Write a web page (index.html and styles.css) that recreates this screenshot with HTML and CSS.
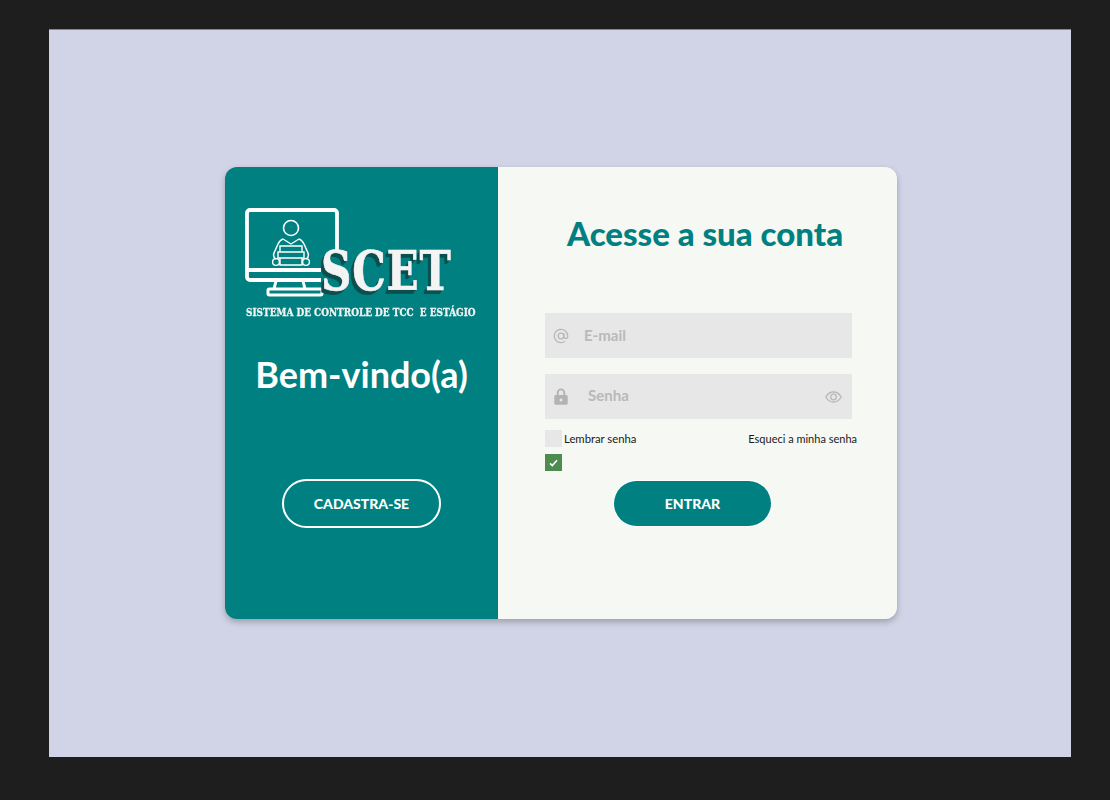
FILE: index.html
```html
<!DOCTYPE html>
<html lang="pt-BR">
<head>
    <meta charset="UTF-8">
    <title>SCET - Login</title>
    <link rel="stylesheet" href="styles.css">
</head>
<body>
<div class="frame">
    <div class="card">
        <section class="welcome">
            <div class="logo">
                <svg class="logo-art" width="110" height="92" viewBox="0 0 110 92" fill="none" stroke="#fff">
                    <path d="M76 72H5a3 3 0 0 1-3-3V5a3 3 0 0 1 3-3h84a3 3 0 0 1 3 3v40" stroke-width="3.8"/>
                    <path d="M2 62h74" stroke-width="3.8"/>
                    <path d="M31 73l-2 8M58 73l2 8" stroke-width="3"/>
                    <rect x="23" y="81" width="54" height="6" rx="1.500" stroke-width="3"/>
                    <circle cx="46" cy="20" r="7.500" stroke-width="1.600"/>
                    <path d="M38 31c-3 1-4 3-5 5l-4 9c-1 3 0 5 2 6M54 31c3 1 4 3 5 5l4 9c1 3 0 5-2 6" stroke-width="1.500"/>
                    <path d="M38 31l8 5 8-5M35 38h22v6H35zM33 44h26v6H33zM35 50h22v7H35z" stroke-width="1.400"/>
                    <circle cx="31" cy="54" r="3.400" stroke-width="1.400"/>
                    <circle cx="61" cy="54" r="3.400" stroke-width="1.400"/>
                </svg>
                <span class="logo-name">SCET</span>
                <span class="logo-sub">SISTEMA DE CONTROLE DE TCC&nbsp; E ESTÁGIO</span>
            </div>
            <h2 class="welcome-title">Bem-vindo(a)</h2>
            <button class="btn-outline">CADASTRA-SE</button>
        </section>

        <section class="access">
            <h1 class="access-title">Acesse a sua conta</h1>
            <form class="login-form">
                <div class="field">
                    <svg class="icon-at" width="16" height="16" viewBox="0 0 24 24" fill="none" stroke="#b9b9b9" stroke-width="2">
                        <circle cx="12" cy="12" r="4.200"/>
                        <path d="M16.200 8v5.500a3 3 0 0 0 5.800 0V12a10 10 0 1 0-4 8"/>
                    </svg>
                    <span class="placeholder">E-mail</span>
                </div>
                <div class="field">
                    <svg class="icon-lock" width="14" height="17" viewBox="0 0 14 17" fill="#b3b3b3">
                        <path d="M2.800 7V4.600a4.200 4.200 0 0 1 8.400 0V7h1a1.500 1.500 0 0 1 1.500 1.500v6.800a1.500 1.500 0 0 1-1.500 1.500H1.800a1.500 1.500 0 0 1-1.500-1.500V8.500A1.500 1.500 0 0 1 1.800 7zM4.700 7h4.600V4.600a2.300 2.300 0 0 0-4.600 0zM7 10.400a1.500 1.500 0 1 0 0 3 1.500 1.500 0 0 0 0-3z" fill-rule="evenodd"/>
                    </svg>
                    <span class="placeholder placeholder-pass">Senha</span>
                    <svg class="icon-eye" width="17" height="12" viewBox="0 0 17 12" fill="none" stroke="#b9b9b9" stroke-width="1.300">
                        <path d="M.8 6C2.600 2.800 5.300 1 8.500 1s5.900 1.800 7.700 5c-1.800 3.200-4.500 5-7.700 5S2.600 9.200.8 6z"/>
                        <circle cx="8.500" cy="6" r="2.800"/>
                    </svg>
                </div>
                <div class="options">
                    <label class="remember"><span class="check"></span>Lembrar senha</label>
                    <a class="forgot">Esqueci a minha senha</a>
                </div>
                <span class="check check-on">
                    <svg width="9" height="8" viewBox="0 0 9 8" fill="none" stroke="#fff" stroke-width="1.600"><path d="M1 4.300l2.300 2.200L8 1.300"/></svg>
                </span>
                <button class="btn-solid" type="button">ENTRAR</button>
            </form>
        </section>
    </div>
</div>
</body>
</html>
```

FILE: styles.css
```css
* {
    margin: 0;
    padding: 0;
    box-sizing: border-box;
}

html, body {
    height: 800px;
    overflow: hidden;
}

body {
    background: #1e1e1e;
    padding: 29px 39px 43px 49px;
    font-family: "Lato", "Noto Sans", sans-serif;
}

.frame {
    height: 728px;
    background: #d1d4e6;
    border-top: 1px solid #85868f;
    display: flex;
    justify-content: center;
    align-items: center;
    padding: 0 0 1px 2px;
}

.card {
    width: 672px;
    height: 452px;
    display: flex;
    border-radius: 12px;
    overflow: hidden;
    box-shadow: 0 3px 6px rgba(0, 0, 0, 0.25);
}

/* lado esquerdo */
.welcome {
    width: 273px;
    background: #008080;
    color: #fff;
    padding-top: 41px;
    display: flex;
    flex-direction: column;
    align-items: center;
}

.logo {
    position: relative;
    width: 233px;
    height: 113px;
    filter: blur(0.4px);
}

.logo-art {
    display: block;
}

.logo-name {
    position: absolute;
    left: 76px;
    top: 33px;
    font-family: "DejaVu Serif", serif;
    font-weight: bold;
    font-size: 54px;
    line-height: 60px;
    letter-spacing: 1px;
    transform: scaleX(0.78);
    transform-origin: left;
    color: #f4f4f4;
    -webkit-text-stroke: 0.6px #f4f4f4;
    text-shadow: -1px 1px 0 #0d4f4f, -2px 2px 0 #0d4f4f, -3px 3px 0 #0d4f4f, -4px 4px 0 #0d4f4f;
}

.logo-sub {
    position: absolute;
    left: 1px;
    top: 97px;
    font-family: "DejaVu Serif", serif;
    font-weight: bold;
    font-size: 10.500px;
    line-height: 14px;
    white-space: nowrap;
    transform: scaleX(0.85);
    transform-origin: left;
    color: #f2f2f2;
    -webkit-text-stroke: 0.3px #f2f2f2;
}

.welcome-title {
    font-size: 36px;
    font-weight: 700;
    line-height: 44px;
    margin-top: 31px;
}

.btn-outline {
    width: 159px;
    height: 49px;
    margin-top: 83px;
    border: 2px solid #fff;
    border-radius: 25px;
    background: transparent;
    color: #fff;
    font-family: inherit;
    font-size: 14px;
    font-weight: 900;
}

/* lado direito */
.access {
    flex: 1;
    background: #f5f8f3;
    padding: 44px 0 0 47px;
}

.access-title {
    width: 320px;
    font-size: 33px;
    line-height: 44px;
    font-weight: 900;
    color: #008080;
    text-align: center;
}

.login-form {
    margin-top: 58px;
    width: 312px;
}

.field {
    width: 307px;
    height: 45px;
    margin-bottom: 16px;
    background: #e7e7e7;
    display: flex;
    align-items: center;
    padding-left: 8px;
}

.placeholder {
    font-size: 15px;
    font-weight: 700;
    color: #b9b9b9;
    margin: 0 0 2px 15px;
}

.icon-lock {
    margin-left: 1px;
}

.placeholder-pass {
    margin: 0 0 4px 20px;
}

.icon-eye {
    margin-left: auto;
    margin-right: 10px;
}

.options {
    width: 312px;
    height: 17px;
    margin-top: -5px;
    display: flex;
    justify-content: space-between;
    align-items: center;
    font-size: 11px;
    color: #1a1a1a;
}

.remember {
    display: flex;
    align-items: center;
    gap: 2px;
    font-size: 11.300px;
}

.check {
    display: flex;
    align-items: center;
    justify-content: center;
    width: 17px;
    height: 17px;
    background: #e7e7e7;
}

.check-on {
    margin-top: 7px;
    background: #4d8b4e;
}

.btn-solid {
    display: block;
    width: 157px;
    height: 45px;
    margin: 10px 0 0 69px;
    border: none;
    border-radius: 23px;
    background: #008080;
    color: #fff;
    font-family: inherit;
    font-size: 14px;
    font-weight: 900;
    box-shadow: 0 0 0 1px #fff;
}
```
